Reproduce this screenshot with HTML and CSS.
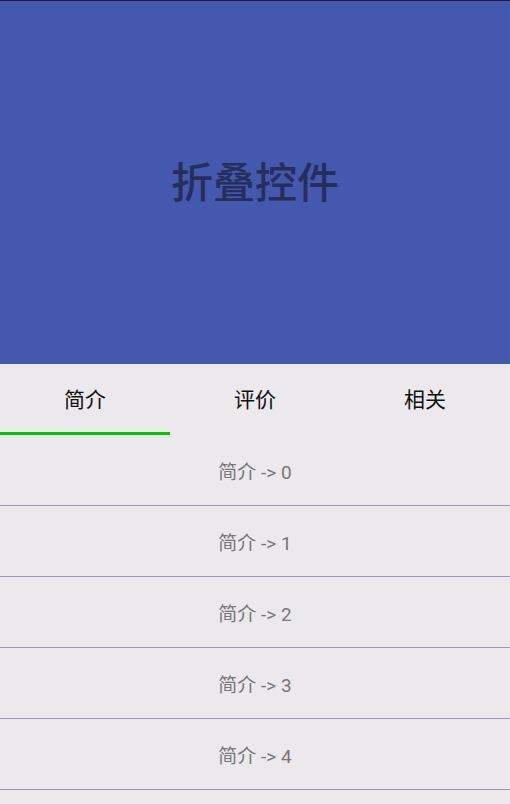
FILE: index.html
```html
<!DOCTYPE html>
<html lang="zh">
<head>
<meta charset="utf-8">
<link rel="stylesheet" href="styles.css">
</head>
<body>
<div class="topline"></div>
<header class="hero">
  <h1 class="title">折叠控件</h1>
</header>
<nav class="tabs">
  <div class="tab active">简介</div>
  <div class="tab">评价</div>
  <div class="tab">相关</div>
</nav>
<ul class="list">
  <li class="item">简介 -&gt; 0</li>
  <li class="item">简介 -&gt; 1</li>
  <li class="item">简介 -&gt; 2</li>
  <li class="item">简介 -&gt; 3</li>
  <li class="item">简介 -&gt; 4</li>
</ul>
</body>
</html>
```
FILE: styles.css
```css
html, body {
  margin: 0;
  padding: 0;
  background: #ebe9ec;
  font-family: Roboto, "Noto Sans CJK SC", sans-serif;
  height: 804px;
  overflow: hidden;
}
.topline {
  height: 1px;
  background: #1c1f2e;
}
.hero {
  height: 363px;
  background: #4458ae;
  display: flex;
  justify-content: center;
  align-items: flex-start;
}
.title {
  margin: 155px 0 0;
  font-size: 42px;
  line-height: 56px;
  font-weight: 500;
  color: #262f5c;
}
.tabs {
  display: grid;
  grid-template-columns: repeat(3, 1fr);
  height: 71px;
}
.tab {
  display: flex;
  align-items: center;
  justify-content: center;
  font-size: 21px;
  color: #111;
  padding-bottom: 4px;
  box-sizing: border-box;
}
.tab.active {
  border-bottom: 3px solid #00c800;
  padding-bottom: 1px;
}
.list {
  list-style: none;
  margin: 0;
  padding: 0;
}
.item {
  height: 70px;
  border-bottom: 1px solid #9898bc;
  display: flex;
  align-items: center;
  justify-content: center;
  font-size: 19px;
  color: #777;
}
```
